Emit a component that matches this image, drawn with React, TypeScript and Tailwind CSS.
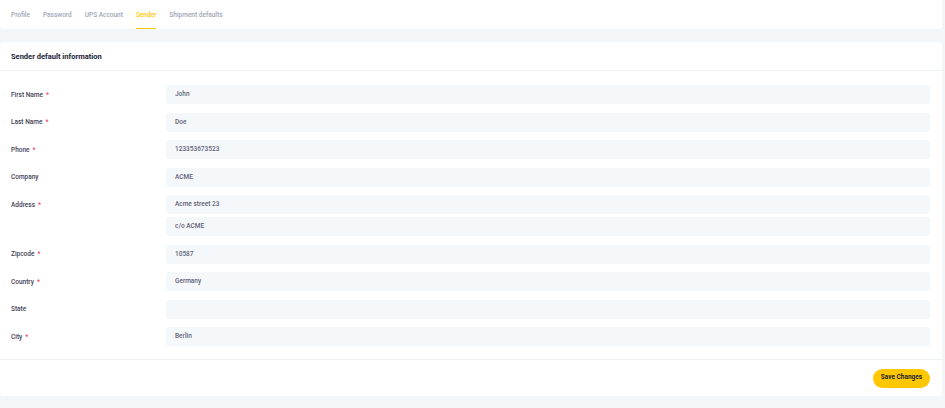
import * as React from "react";

const TABS = ["Profile", "Password", "UPS Account", "Sender", "Shipment defaults"];

const FIELDS: { label: string; required: boolean; values: string[] }[] = [
  { label: "First Name", required: true, values: ["John"] },
  { label: "Last Name", required: true, values: ["Doe"] },
  { label: "Phone", required: true, values: ["123353673523"] },
  { label: "Company", required: false, values: ["ACME"] },
  { label: "Address", required: true, values: ["Acme street 23", "c/o ACME"] },
  { label: "Zipcode", required: true, values: ["10587"] },
  { label: "Country", required: true, values: ["Germany"] },
  { label: "State", required: false, values: [""] },
  { label: "City", required: true, values: ["Berlin"] },
];

function FieldRow({ label, required, values }: (typeof FIELDS)[number]) {
  return (
    <div className="flex mb-[8.5px] last:mb-0">
      <div className="w-[155px] shrink-0 pt-[6.5px] text-[6.5px] font-medium text-[#3f4254] leading-[1]">
        {label}
        {required && <span className="ml-[3px] text-[#f1416c]">*</span>}
      </div>
      <div className="flex-1 flex flex-col gap-[3px]">
        {values.map((v, i) => (
          <div
            key={i}
            className="h-[19px] rounded-[3px] bg-[#f5f8fa] px-[9px] pt-[1px] flex items-center text-[6.5px] font-medium text-[#5e6278]"
          >
            {v}
          </div>
        ))}
      </div>
    </div>
  );
}

export default function App() {
  return (
    <div
      className="w-[945px] h-[408px] bg-[#f3f6f9] overflow-hidden"
      style={{ fontFamily: "Roboto, 'Liberation Sans', sans-serif" }}
    >
      <div className="w-[942px]">
        {/* Tabs */}
        <div className="h-[29px] bg-white flex items-stretch gap-[13px] px-[11px] rounded-b-[3px]">
          {TABS.map((t) => {
            const active = t === "Sender";
            return (
              <div
                key={t}
                className={
                  "flex items-center pt-[3px] text-[6.5px] font-medium border-b-[1.5px] " +
                  (active
                    ? "text-[#ffc700] border-[#ffc700]"
                    : "text-[#a1a5b7] border-transparent")
                }
              >
                {t}
              </div>
            );
          })}
        </div>

        {/* Card */}
        <div className="mt-[13px] bg-white rounded-[4px]">
          <div className="h-[29px] flex items-center pt-[1px] px-[11px] border-b border-[#eff2f5]">
            <h3 className="text-[7.5px] font-bold text-[#181c32]">
              Sender default information
            </h3>
          </div>

          <div className="pl-[11px] pr-[12px] pt-[14px] pb-[13px] border-b border-[#eff2f5]">
            {FIELDS.map((f) => (
              <FieldRow key={f.label} {...f} />
            ))}
          </div>

          <div className="h-[36px] flex items-center justify-end pr-[12px]">
            <button className="h-[19px] w-[57px] rounded-full bg-[#ffc700] text-[6.5px] font-bold text-[#181c32]">
              Save Changes
            </button>
          </div>
        </div>
      </div>
    </div>
  );
}
